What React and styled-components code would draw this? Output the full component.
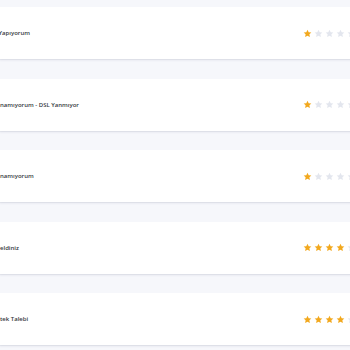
import React from 'react'
import styled, { createGlobalStyle } from 'styled-components';

const GlobalStyle = createGlobalStyle`
  html, body {
    margin: 0;
    padding: 0;
    background: #f6f7fb;
    overflow: hidden;
  }
  body {
    font-family: "Open Sans", "Noto Sans", sans-serif;
  }
`

const Page = styled.div`
  width: 350px;
  height: 350px;
  overflow: hidden;
  padding-top: 7px;
  box-sizing: border-box;
`

const List = styled.div`
  display: flex;
  flex-direction: column;
  gap: 19.5px;
  margin: 0 -33px 0 0;
`

const Card = styled.div`
  height: 52px;
  background: #ffffff;
  display: flex;
  align-items: center;
  justify-content: space-between;
  box-shadow: 0 1px 1px rgba(40, 50, 90, 0.08), 0 2px 2px rgba(40, 50, 90, 0.04);
  overflow: hidden;
`

const Label = styled.span`
  font-size: 6px;
  font-weight: 600;
  color: #35393e;
  white-space: nowrap;
  margin-left: ${p => p.$shift || 0}px;
`

const Stars = styled.div`
  display: flex;
  gap: 2px;
  width: 80px;
  flex-shrink: 0;
`

const StarIcon = ({ filled }) => (
  <svg width="9" height="9" viewBox="0 0 24 24">
    <path
      d="M12 1.8l3.1 6.6 7.2.9-5.3 5 1.4 7.1L12 17.9l-6.4 3.5 1.4-7.1-5.3-5 7.2-.9z"
      fill={filled ? '#f2a81d' : '#e3e6ee'}
    />
  </svg>
)

const rows = [
  { text: 'Yapıyorum', shift: -1.5, rating: 1 },
  { text: 'namıyorum - DSL Yanmıyor', rating: 1 },
  { text: 'namıyorum', rating: 1 },
  { text: 'eldiniz', rating: 4 },
  { text: 'tek Talebi', rating: 4 },
]

export default function App() {
  return (
    <Page>
      <GlobalStyle />
      <List>
        {rows.map((r, i) => (
          <Card key={i}>
            <Label $shift={r.shift}>{r.text}</Label>
            <Stars>
              {[0, 1, 2, 3, 4].map(n => <StarIcon key={n} filled={n < r.rating} />)}
            </Stars>
          </Card>
        ))}
      </List>
    </Page>
  );
}
